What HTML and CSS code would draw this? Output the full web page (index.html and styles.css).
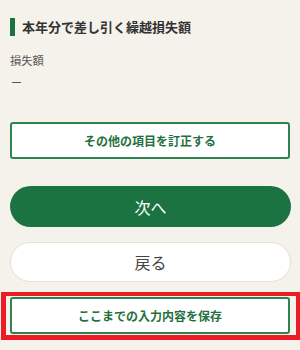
FILE: index.html
```html
<!DOCTYPE html>
<html lang="ja">
<head>
<meta charset="utf-8">
<link rel="stylesheet" href="styles.css">
</head>
<body>
<main class="page">
  <h2 class="heading">本年分で差し引く繰越損失額</h2>
  <div class="field">
    <div class="label">損失額</div>
    <div class="value">ー</div>
  </div>
  <button class="btn-outline btn-first">その他の項目を訂正する</button>
  <button class="btn-pill btn-next">次へ</button>
  <button class="btn-pill btn-back">戻る</button>
  <div class="highlight">
    <button class="btn-outline">ここまでの入力内容を保存</button>
  </div>
</main>
</body>
</html>
```
FILE: styles.css
```css
html, body {
  margin: 0;
  padding: 0;
  background: #f5f2eb;
}
body {
  font-family: "Noto Sans CJK JP", "Noto Sans", sans-serif;
  width: 300px;
  height: 350px;
  overflow: hidden;
}
.page {
  display: flex;
  flex-direction: column;
  padding: 18px 10px 0 10px;
}
.heading {
  margin: 0;
  font-size: 13px;
  font-weight: 700;
  line-height: 18px;
  color: #333;
  border-left: 5px solid #1b7342;
  padding-left: 7px;
}
.field {
  margin-top: 16px;
  display: flex;
  flex-direction: column;
}
.label {
  font-size: 11.3px;
  line-height: 16px;
  color: #555;
}
.value {
  margin-top: 6px;
  font-size: 11px;
  line-height: 16px;
  color: #555;
  padding-left: 1px;
}
button {
  font-family: inherit;
  cursor: pointer;
  margin: 0;
}
.btn-outline {
  width: 280px;
  height: 37px;
  background: #fff;
  border: 2px solid #2f8352;
  border-radius: 3px;
  color: #1f7140;
  font-size: 12px;
  font-weight: 700;
  padding: 0;
}
.btn-first {
  margin-top: 32px;
}
.btn-pill {
  width: 281px;
  height: 41px;
  border-radius: 21px;
  font-size: 16px;
  padding: 0;
}
.btn-next {
  margin-top: 27px;
  background: #1b7342;
  border: none;
  color: #fff;
}
.btn-back {
  margin-top: 15px;
  height: 40px;
  background: #fff;
  border: 1px solid #e6e0d5;
  color: #444;
}
.highlight {
  margin: 10px 0 0 -9px;
  width: 285px;
  border: 5px solid #ec1c24;
  border-top-width: 4px;
  padding: 1px 1px 1px 4px;
  background: #f5f2eb;
}
```
